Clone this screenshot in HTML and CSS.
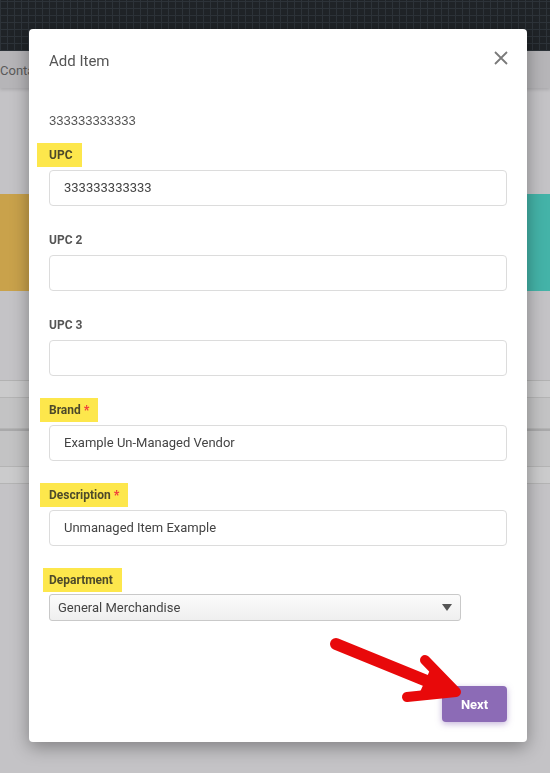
FILE: index.html
```html
<!DOCTYPE html>
<html>
<head>
    <title>Add Item</title>
    <link rel="stylesheet" href="styles.css">
</head>
<body>
    <div class="topbar"></div>
    <div class="subnav">Contacts</div>
    <div class="content">
        <div class="tiles">
            <div class="tile tile-gold"></div>
            <div class="tile tile-teal"></div>
        </div>
        <div class="table">
            <div class="row row-head"></div>
            <div class="row"></div>
            <div class="row row-split"></div>
            <div class="row row-light"></div>
        </div>
    </div>

    <div class="modal">
        <div class="modal-header">
            <h2>Add Item</h2>
            <svg class="close" width="14" height="14" viewBox="0 0 14 14">
                <path d="M1 1 L13 13 M13 1 L1 13" stroke="#7a7a7a" stroke-width="1.8" fill="none"/>
            </svg>
        </div>
        <div class="modal-body">
            <div class="scanned">333333333333</div>

            <div class="field">
                <label><span class="hl hl-upc">UPC</span></label>
                <div class="input">333333333333</div>
            </div>
            <div class="field">
                <label>UPC 2</label>
                <div class="input"></div>
            </div>
            <div class="field">
                <label>UPC 3</label>
                <div class="input"></div>
            </div>
            <div class="field">
                <label><span class="hl">Brand <b class="req">*</b></span></label>
                <div class="input">Example Un-Managed Vendor</div>
            </div>
            <div class="field">
                <label><span class="hl">Description <b class="req">*</b></span></label>
                <div class="input">Unmanaged Item Example</div>
            </div>
            <div class="field">
                <label><span class="hl hl-dept">Department</span></label>
                <div class="select">
                    <span>General Merchandise</span>
                    <svg width="10" height="7" viewBox="0 0 10 7"><path d="M0 0 L10 0 L5 7 Z" fill="#555"/></svg>
                </div>
            </div>
        </div>
        <div class="modal-footer">
            <button>Next</button>
        </div>
    </div>

    <!-- annotation arrow -->
    <svg class="arrow" width="550" height="773" viewBox="0 0 550 773">
        <line x1="336" y1="644" x2="444" y2="688" stroke="#e8090a" stroke-width="12" stroke-linecap="round"/>
        <polyline points="425,660 456,692 407,697" fill="none" stroke="#e8090a" stroke-width="10" stroke-linejoin="round" stroke-linecap="round"/>
        <polygon points="430,670 454,692 420,692" fill="#e8090a"/>
    </svg>
</body>
</html>
```

FILE: styles.css
```css
body {
    margin: 0;
    font-family: Roboto, "Liberation Sans", sans-serif;
    background-color: #c4c3c6;
    height: 773px;
    overflow: hidden;
}

.topbar {
    height: 51px;
    background-color: #1f2327;
    background-image:
        repeating-linear-gradient(90deg, #2d3339 0 1px, transparent 1px 7px),
        repeating-linear-gradient(0deg, #2d3339 0 1px, transparent 1px 7px);
}

.subnav {
    height: 37px;
    line-height: 39px;
    background-color: #b6b5b8;
    color: #5a5a5a;
    font-size: 13px;
    box-shadow: 0 2px 3px rgba(0, 0, 0, 0.12);
}

.tiles {
    display: flex;
    justify-content: space-between;
    padding-top: 106px;
}

.tile {
    width: 260px;
    height: 97px;
}

.tile-gold {
    background-color: #c9a24b;
}

.tile-teal {
    background-color: #44b3a8;
}

.table {
    margin-top: 89px;
    border-top: 1px solid #b2b2b2;
}

.row {
    height: 30px;
    background-color: #c3c3c4;
    border-bottom: 1px solid #b4b4b4;
}

.row-head {
    height: 16px;
    background-color: #cacacb;
}

.row-split {
    height: 35px;
    border-top: 2px solid #a9a9aa;
}

.row-light {
    height: 16px;
    background-color: #cbcbcc;
}

/* modal */
.modal {
    position: fixed;
    top: 29px;
    left: 29px;
    width: 498px;
    height: 713px;
    background: #fff;
    border-radius: 4px;
    box-shadow: 0 5px 18px rgba(0, 0, 0, 0.35);
    display: flex;
    flex-direction: column;
}

.modal-header {
    display: flex;
    justify-content: space-between;
    align-items: center;
    padding: 21px 20px 20px;
}

.modal-header h2 {
    margin: 0;
    font-size: 15px;
    line-height: 22px;
    font-weight: normal;
    color: #555;
}

.close {
    margin-right: -1px;
    margin-top: -6px;
}

.modal-body {
    padding: 0 20px;
}

.scanned {
    margin-top: 20px;
    font-family: "Liberation Sans", Arial, sans-serif;
    font-size: 13px;
    line-height: 18px;
    color: #555;
}

.field {
    margin-top: 13px;
}

.field + .field {
    margin-top: 22px;
}

label {
    display: block;
    height: 24px;
    line-height: 24px;
    font-size: 12px;
    font-weight: bold;
    color: #555;
}

.hl {
    display: inline-block;
    background-color: #fde74c;
    color: #4d4a2a;
    padding: 0 9px 0 9px;
    margin-left: -9px;
}

.hl-upc {
    padding-left: 12px;
    margin-left: -12px;
}

.hl-dept {
    padding-left: 6px;
    margin-left: -6px;
}

.req {
    color: #f03c3c;
}

.input {
    margin-top: 3px;
    height: 34px;
    line-height: 34px;
    border: 1px solid #dcdcdc;
    border-radius: 4px;
    padding: 0 14px;
    font-size: 13px;
    color: #444;
}

.select {
    margin-top: 2px;
    width: 394px;
    height: 25px;
    padding: 0 8px;
    display: flex;
    justify-content: space-between;
    align-items: center;
    border: 1px solid #c9c9c9;
    border-radius: 3px;
    background: linear-gradient(#fbfbfb, #efefef);
    font-size: 13px;
    color: #444;
}

.modal-footer {
    margin-top: auto;
    padding: 0 20px 20px;
    display: flex;
    justify-content: flex-end;
}

button {
    width: 65px;
    height: 36px;
    background-color: #8c6bb6;
    color: #fff;
    border: none;
    border-radius: 4px;
    font-family: Roboto, sans-serif;
    font-size: 13px;
    font-weight: bold;
    box-shadow: 0 2px 6px rgba(140, 107, 182, 0.5);
    cursor: pointer;
}

.arrow {
    position: fixed;
    top: 0;
    left: 0;
}
```
